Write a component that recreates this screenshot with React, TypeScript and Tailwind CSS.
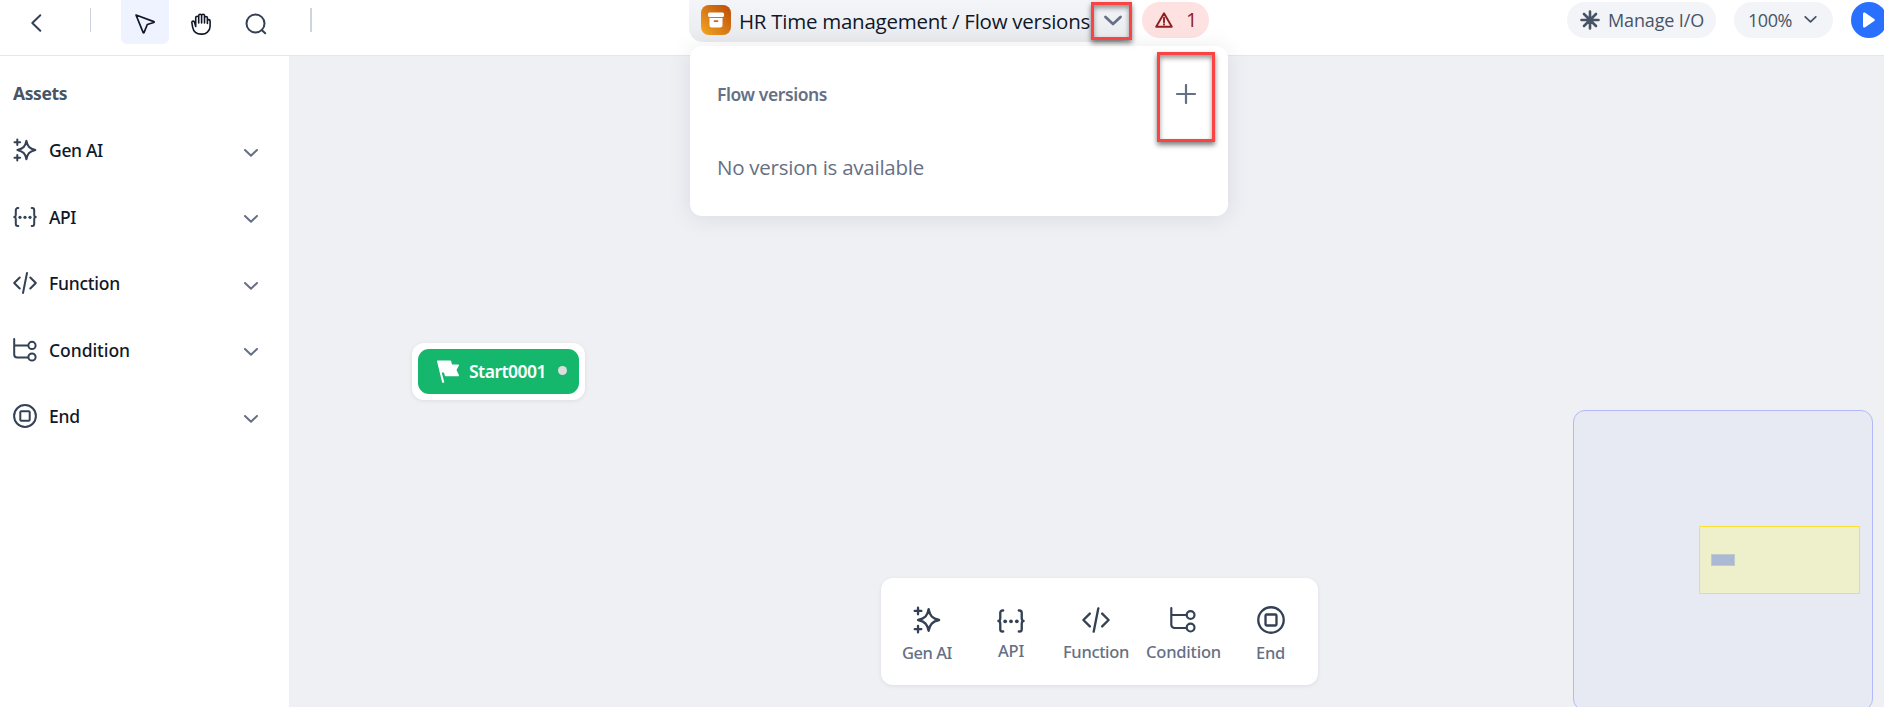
import type { ReactNode } from "react";

type IconProps = { className?: string };

const stroke = {
  fill: "none",
  stroke: "currentColor",
  strokeWidth: 2,
  strokeLinecap: "round" as const,
  strokeLinejoin: "round" as const,
};

function GenAiIcon({ className }: IconProps) {
  return (
    <svg viewBox="0 0 24 24" className={className} {...stroke}>
      <path d="M13.400 2.800c1.100 5.500 3 7.900 9 9.200-6 1.400-7.900 3.700-9 9.200-1.100-5.500-3-7.800-9-9.200 6-1.300 7.900-3.700 9-9.200z" />
      <path d="M4.300 1.400v5.600M1.500 4.200h5.600M4.300 17v5.600M1.500 19.800h5.600" />
    </svg>
  );
}

function ApiIcon({ className }: IconProps) {
  return (
    <svg viewBox="0 0 24 24" className={className} {...stroke}>
      <path d="M5.300 3h-.5a2 2 0 0 0-2 2v4.500c0 1.600-.6 2.500-1.600 2.500 1 0 1.600.9 1.600 2.500V19a2 2 0 0 0 2 2h.5M18.700 3h.5a2 2 0 0 1 2 2v4.500c0 1.600.6 2.500 1.600 2.500-1 0-1.600.9-1.600 2.500V19a2 2 0 0 1-2 2h-.5" />
      <g fill="currentColor" stroke="none">
        <circle cx="7" cy="12.300" r="1.600" />
        <circle cx="12" cy="12.300" r="1.600" />
        <circle cx="17" cy="12.300" r="1.600" />
      </g>
    </svg>
  );
}

function FunctionIcon({ className }: IconProps) {
  return (
    <svg viewBox="0 0 24 24" className={className} {...stroke}>
      <path d="M6.700 6.500 1.200 12l5.500 5.500M17.300 6.500l5.500 5.500-5.500 5.500M14 2l-4 20" />
    </svg>
  );
}

function ConditionIcon({ className }: IconProps) {
  return (
    <svg viewBox="0 0 24 24" className={className} {...stroke}>
      <path d="M1.200 1v15.400a3 3 0 0 0 3 3h11M1.200 7.400h14" />
      <circle cx="19" cy="7.400" r="3.600" />
      <circle cx="19" cy="19" r="3.600" />
    </svg>
  );
}

function EndIcon({ className }: IconProps) {
  return (
    <svg viewBox="0 0 24 24" className={className} {...stroke}>
      <circle cx="12" cy="12" r="10.900" />
      <rect x="7.300" y="7.300" width="9.400" height="9.400" rx="1" />
    </svg>
  );
}

function Chevron({ className }: IconProps) {
  return (
    <svg viewBox="0 0 14 8" className={className} {...stroke}>
      <path d="m1 1 6 5.800L13 1" />
    </svg>
  );
}

const assets = [
  { name: "Gen AI", Icon: GenAiIcon, text: "w-[54px]", dock: "w-[50px]", size: "h-7 w-7", cell: "w-[50px]", pad: "pt-[28px] gap-[7px]" },
  { name: "API", Icon: ApiIcon, text: "w-[27px]", dock: "w-[26px]", size: "h-7 w-7", cell: "ml-[45px] w-[28px]", pad: "pt-[29px] gap-[4px]" },
  { name: "Function", Icon: FunctionIcon, text: "w-[71px]", dock: "w-[66px]", size: "h-7 w-7", cell: "ml-[38px] w-[66px]", pad: "pt-[28px] gap-[6px]" },
  { name: "Condition", Icon: ConditionIcon, text: "w-[81px]", dock: "w-[75px]", size: "h-[26px] w-[26px] mr-px", cell: "ml-[17px] w-[75px]", pad: "pt-[29px] gap-[7px]" },
  { name: "End", Icon: EndIcon, text: "w-[31px]", dock: "w-[29px]", size: "h-7 w-7", cell: "ml-[35px] w-[29px]", pad: "pt-[28px] gap-[7px]" },
];

function ToolButton({ active, className, children }: { active?: boolean; className: string; children: ReactNode }) {
  return (
    <button
      className={`flex h-11 w-12 items-center justify-center rounded-b-md pt-1 ${active ? "bg-[#eef3ff]" : ""} ${className}`}
    >
      {children}
    </button>
  );
}

function Header() {
  return (
    <header className="flex h-14 shrink-0 items-start border-b border-[#e4e6ea] bg-white">
      <div className="flex w-[689px] shrink-0 items-start">
        <svg viewBox="0 0 12 20" className="mt-[13px] ml-[30px] h-5 w-3 text-[#344054]" {...stroke}>
          <path d="M10.300 2.200 2.300 10l8 7.800" />
        </svg>
        <div className="mt-2 ml-[48px] h-6 w-px bg-[#cfd3de]" />
        <ToolButton active className="ml-[30px]">
          <svg viewBox="0 0 22 22" className="h-[22px] w-[22px] text-[#101828]" {...stroke} strokeWidth={1.700}>
            <path d="M2 2l17.800 6.600c.5.2.5.8 0 .9l-6.500 2-3.200 7.900c-.2.500-.8.500-1 0z" />
          </svg>
        </ToolButton>
        <ToolButton className="ml-[8px]">
          <svg viewBox="0 0 20 22" className="h-[22px] w-5 text-[#101828]" {...stroke} strokeWidth={1.600}>
            <path d="M4.700 13.500V4.800a1.500 1.500 0 0 1 3 0V10V2.700a1.400 1.400 0 0 1 2.900 0V10V2.700a1.400 1.400 0 0 1 2.900 0V10V5a1.400 1.400 0 0 1 2.900 0v5.500V8a1.300 1.300 0 0 1 2.700 0v5.200a8 8 0 0 1-8.800 7.900c-4.900 0-7.900-2.700-8.700-7l-.7-4.200c-.2-1.300.5-1.800 1.200-1.800.9 0 1.300.6 1.500 1.500z" />
          </svg>
        </ToolButton>
        <ToolButton className="ml-[7px]">
          <svg viewBox="0 0 22 22" className="h-[22px] w-[22px] text-[#344054]" {...stroke}>
            <circle cx="10.500" cy="10.500" r="9" />
            <path d="m17 17.200 3.200 3" />
          </svg>
        </ToolButton>
        <div className="mt-2 ml-[30px] h-6 w-0.5 bg-[#cfd3de]" />
      </div>

      <div className="flex h-[42px] w-[443px] shrink-0 items-start rounded-b-[14px] bg-linear-to-b from-[#f4f5f8] to-[#eaebef] pt-[5px] pl-3">
        <div className="flex h-[30px] w-[30px] shrink-0 items-center justify-center rounded-lg bg-linear-to-tr from-[#f6a723] to-[#b94a08]">
          <svg viewBox="0 0 18 16" className="h-4 w-[18px] fill-white">
            <rect x="1" y="0.500" width="16" height="4.600" rx="1.500" />
            <path d="M2.500 6h13v7a2.500 2.500 0 0 1-2.500 2.500H5A2.500 2.500 0 0 1 2.500 13z" />
            <rect x="6.600" y="8.300" width="4.800" height="1.700" rx="0.800" className="fill-[#cf6912]" />
          </svg>
        </div>
        <Fit className="ml-2 w-[351px] font-['Open_Sans','Noto_Sans',sans-serif] text-[20.500px] leading-8 font-[370] text-[#101828]" text="HR Time management / Flow versions" />
        <svg viewBox="0 0 18 12" className="mt-[10px] ml-[14px] h-3 w-[18px] text-[#667085]" {...stroke} strokeWidth={2.700}>
          <path d="m1.500 2 7.500 7 7.500-7" />
        </svg>
      </div>

      <div className="mt-[2px] ml-[10px] flex h-9 w-[67px] shrink-0 items-center rounded-full bg-[#fee2e2] pl-[13px] text-[#8f2020]">
        <svg viewBox="0 0 18 16" className="h-4 w-[18px]" {...stroke} strokeWidth={1.900}>
          <path d="M9 1.200 1.200 14.800h15.600zM9 5.800v4.400M9 12.300v.3" />
        </svg>
        <span className="ml-[13px] font-['Open_Sans','Noto_Sans',sans-serif] text-[20px] font-[370]">1</span>
      </div>

      <div className="ml-[358px] mt-[2px] flex h-9 w-[149px] shrink-0 items-center rounded-full bg-[#f2f4f8] pl-[13px] text-[#475467]">
        <svg viewBox="0 0 20 20" className="h-5 w-5" {...stroke} strokeWidth={2.600}>
          <path d="M10 1.500v17M1.500 10h17M4 4l12 12M16 4 4 16" />
        </svg>
        <Fit className="ml-[8px] w-[96px] font-['Open_Sans','Noto_Sans',sans-serif] text-[18px] font-[370]" text="Manage I/O" />
      </div>
      <div className="ml-[18px] mt-[2px] flex h-9 w-[99px] shrink-0 items-center rounded-full bg-[#f2f4f8] pl-[14px] text-[#475467]">
        <Fit className="w-[44px] font-['Open_Sans','Noto_Sans',sans-serif] text-[18px] font-[370]" text="100%" />
        <Chevron className="mb-[2px] ml-[12px] h-[7px] w-[13px]" />
      </div>
      <div className="ml-[18px] mt-[2px] flex h-9 w-9 shrink-0 items-center justify-center rounded-full bg-[#2970ff]">
        <svg viewBox="0 0 12 16" className="h-4 w-3 fill-white">
          <path d="M0 1.800C0 .6 1.200 0 2.200.7l9 6.200c.9.600.9 1.600 0 2.200l-9 6.200C1.200 16 0 15.400 0 14.200z" />
        </svg>
      </div>
    </header>
  );
}

function Fit({ text, className }: { text: string; className: string }) {
  return (
    <span
      className={`block shrink-0 whitespace-nowrap ${className}`}
      ref={(el) => {
        if (!el) return;
        el.style.letterSpacing = "0px";
        const range = document.createRange();
        range.selectNodeContents(el);
        const natural = range.getBoundingClientRect().width;
        el.style.letterSpacing = `${(el.clientWidth - natural) / text.length}px`;
      }}
    >
      {text}
    </span>
  );
}

function Sidebar() {
  return (
    <aside className="w-[289px] shrink-0 bg-white">
      <h2 className="mt-[23px] ml-[13px] leading-[28px] text-[#475467]">
        <Fit className="w-[54px] text-[17.500px] font-bold" text="Assets" />
      </h2>
      <ul className="mt-[10px]">
        {assets.map(({ name, Icon, text }) => (
          <li key={name} className="flex h-[66.500px] items-center">
            <Icon className="ml-[13px] h-6 w-6 text-[#344054]" />
            <Fit className={`ml-3 text-[17.500px] font-medium text-[#101828] ${text}`} text={name} />
            <Chevron className="mt-[5px] mr-[31px] ml-auto h-2 w-[14px] text-[#667085]" />
          </li>
        ))}
      </ul>
    </aside>
  );
}

function StartNode() {
  return (
    <div className="absolute top-[287px] left-[123px] rounded-xl bg-white p-[6px] shadow-[0_1px_4px_rgba(16,24,40,0.08)]">
      <div className="flex h-[45px] w-[161px] items-center rounded-[11px] bg-[#15b76c] pl-[19px]">
        <svg viewBox="0 0 22 23" className="h-[23px] w-[22px] fill-white">
          <path d="M0 1.300C0 .6.400.400 1 .4h11.800c.9 0 1.300.4 1.500 1.200l.7 2.900h6.200c.8 0 1 .6.600 1.200l-2.300 4.400 2.400 5c.3.700 0 1.200-.7 1.200H9.100c-.8 0-1.200-.3-1.400-1l-.7-2.800H4.700l2.500 9.300c.1.500-.1.800-.5.900l-.9.100c-.4 0-.6-.2-.7-.6z" />
        </svg>
        <Fit className="ml-[10px] w-[77px] text-[17.500px] font-semibold text-white" text="Start0001" />
        <span className="mb-[2px] ml-[12px] h-[9px] w-[9px] rounded-full bg-[#dcdedd]" />
      </div>
    </div>
  );
}

function Dock() {
  return (
    <div className="absolute top-[522px] left-[592px] flex h-[107px] w-[437px] rounded-xl bg-white pl-[21px] shadow-[0_1px_4px_rgba(16,24,40,0.08)]">
      {assets.map(({ name, Icon, size, cell, dock, pad }) => (
        <div key={name} className={`flex shrink-0 flex-col items-center ${cell} ${pad}`}>
          <Icon className={`shrink-0 text-[#344054] ${size}`} />
          <Fit className={`text-[16.500px] leading-6 font-medium text-[#667085] ${dock}`} text={name} />
        </div>
      ))}
    </div>
  );
}

function Minimap() {
  return (
    <div className="absolute top-[354px] left-[1284px] h-[301px] w-[300px] rounded-xl border border-[#b3b9fb] bg-[#e7eaf2]">
      <div className="absolute top-[115px] left-[125px] h-[68px] w-[161px] border border-[#ffe135] bg-[#eef0cc]">
        <div className="absolute top-[27px] left-[11px] h-3 w-6 border border-[#bfcbc8] bg-[#acb9d5]" />
      </div>
    </div>
  );
}

function VersionsMenu() {
  return (
    <div className="absolute top-[46px] left-[690px] h-[170px] w-[538px] rounded-xl bg-white shadow-[0_2px_24px_rgba(16,24,40,0.09)]">
      <div className="flex justify-between pl-[27px]">
        <Fit className="mt-[34px] w-[110px] text-[17.500px] leading-7 font-semibold text-[#667085]" text="Flow versions" />
        <svg viewBox="0 0 20 20" className="mt-[38px] mr-[32px] h-5 w-5 text-[#667085]" {...stroke} strokeWidth={2.200}>
          <path d="M10 1v18M1 10h18" />
        </svg>
      </div>
      <Fit className="mt-[43px] ml-[27px] w-[207px] font-['Open_Sans','Noto_Sans',sans-serif] text-[20.500px] leading-8 font-[370] text-[#667085]" text="No version is available" />
    </div>
  );
}

export default function App() {
  return (
    <div className="relative flex h-[707px] w-[1884px] flex-col overflow-hidden bg-[#eff0f4] font-['Noto_Sans',sans-serif]">
      <Header />
      <div className="flex min-h-0 flex-1">
        <Sidebar />
        <main className="relative flex-1 overflow-hidden">
          <StartNode />
          <Dock />
          <Minimap />
        </main>
      </div>
      <VersionsMenu />
      <div className="absolute top-[2px] left-[1091px] h-[38px] w-[41px] border-3 border-[#fb4343] shadow-[0_3px_5px_rgba(0,0,0,0.5),inset_0_3px_5px_rgba(0,0,0,0.4)]" />
      <div className="absolute top-[52px] left-[1157px] h-[90px] w-[58px] border-3 border-[#fb4343] shadow-[0_3px_5px_rgba(0,0,0,0.5),inset_0_3px_5px_rgba(0,0,0,0.4)]" />
    </div>
  );
}
